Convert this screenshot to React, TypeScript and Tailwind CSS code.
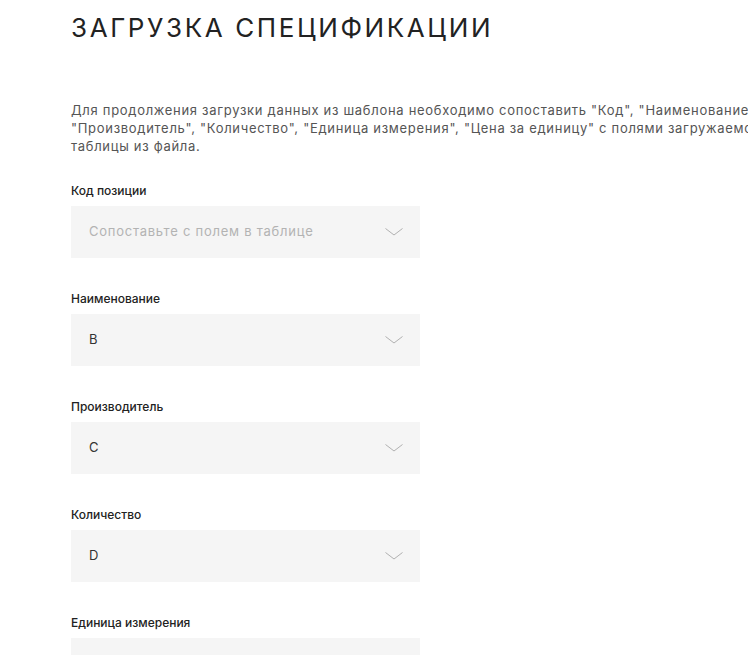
import React from 'react';

type Field = { label: string; value?: string };

const FIELDS: Field[] = [
  { label: 'Код позиции' },
  { label: 'Наименование', value: 'B' },
  { label: 'Производитель', value: 'C' },
  { label: 'Количество', value: 'D' },
  { label: 'Единица измерения', value: 'E' },
  { label: 'Цена за единицу', value: 'F' },
];

const Chevron: React.FC = () => (
  <svg width="18" height="8" viewBox="0 0 18 8" fill="none" className="shrink-0">
    <path d="M0.5 0.5 L9 7 L17.5 0.5" stroke="#a8a8a8" strokeWidth="0.9" />
  </svg>
);

const App: React.FC = () => {
  return (
    <div className="w-full h-[655px] overflow-hidden bg-white font-['Inter',sans-serif]">
      <div className="w-[780px] pl-[71px] pt-[14px]">
        <h1 className="text-[26px] leading-[28px] tracking-[0.1em] text-[#222] font-normal">
          ЗАГРУЗКА СПЕЦИФИКАЦИИ
        </h1>

        <p className="mt-[59px] w-[700px] text-[13px] leading-[18px] tracking-[0.7px] text-[#555]">
          Для продолжения загрузки данных из шаблона необходимо сопоставить "Код", "Наименование",
          "Производитель", "Количество", "Единица измерения", "Цена за единицу" с полями загружаемой
          таблицы из файла.
        </p>

        <div className="mt-[27px] flex flex-col gap-8">
          {FIELDS.map(f => (
            <div key={f.label}>
              <label className="block text-[12px] leading-4 font-medium text-[#222] pt-px mb-[7px]">{f.label}</label>
              <div className="w-[349px] h-[52px] bg-[#f5f5f5] flex items-center justify-between pl-[18px] pr-[17px]">
                <span className={`text-[13px] tracking-[0.75px] ${f.value ? 'text-[#333]' : 'text-[#b3b3b3]'}`}>
                  {f.value ?? 'Сопоставьте с полем в таблице'}
                </span>
                <Chevron />
              </div>
            </div>
          ))}
        </div>
      </div>
    </div>
  );
};

export default App;
